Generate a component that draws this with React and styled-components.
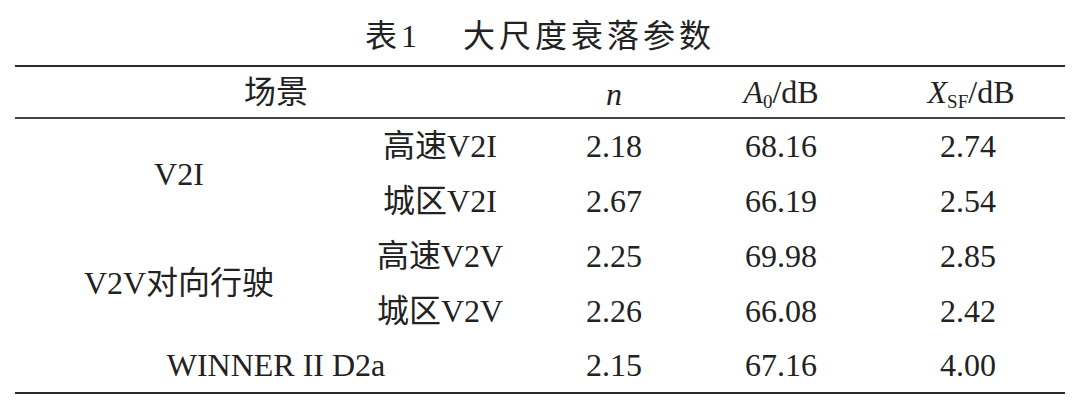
import React from "react";
import styled, { createGlobalStyle } from "styled-components";

const GlobalStyle = createGlobalStyle`
  html, body {
    margin: 0;
    padding: 0;
    background: #ffffff;
  }
  body {
    font-family: "Liberation Serif", "Noto Sans CJK SC", serif;
    color: #222222;
  }
`;

const Page = styled.div`
  width: 1080px;
  height: 409px;
  background: #ffffff;
  overflow: hidden;
`;

const Caption = styled.div`
  height: 65px;
  box-sizing: border-box;
  padding-top: 7px;
  display: flex;
  align-items: center;
  justify-content: center;
  gap: 42px;
  font-size: 32px;
  line-height: 1;
  color: #222;
`;

const CaptionPart = styled.span`
  letter-spacing: ${(props) => props.spacing || 0}px;
`;

const Table = styled.table`
  width: 1050px;
  margin: 0 15px;
  border-collapse: collapse;
  table-layout: fixed;
  border-top: 2px solid #2a2a2a;
  border-bottom: 2px solid #2a2a2a;
  font-size: 32px;
  line-height: 1;
`;

const HeadRow = styled.tr`
  height: 52px;
  border-bottom: 2px solid #444;
`;

const Row = styled.tr`
  height: 55px;
`;

const Cell = styled.td`
  padding: 0;
  text-align: center;
  vertical-align: middle;
  white-space: nowrap;
  font-weight: 400;
  padding-left: ${(props) => props.shift || 0}px;
  padding-top: ${(props) => props.down || 0}px;
`;

const Head = styled(Cell).attrs({ as: "th" })`
  font-weight: 400;
`;

const Italic = styled.i`
  font-style: italic;
`;

const Sub = styled.sub`
  font-size: 19px;
  vertical-align: -5px;
  line-height: 0;
`;

const rows = [
  { group: "V2I", span: 2, name: "高速V2I", n: "2.18", a0: "68.16", xsf: "2.74" },
  { name: "城区V2I", n: "2.67", a0: "66.19", xsf: "2.54" },
  { group: "V2V对向行驶", span: 2, name: "高速V2V", n: "2.25", a0: "69.98", xsf: "2.85" },
  { name: "城区V2V", n: "2.26", a0: "66.08", xsf: "2.42" },
];

export default function App() {
  return (
    <>
      <GlobalStyle />
      <Page>
        <Caption>
          <CaptionPart spacing={4}>表1</CaptionPart>
          <CaptionPart spacing={4}>大尺度衰落参数</CaptionPart>
        </Caption>
        <Table>
          <colgroup>
            <col style={{ width: 328 }} />
            <col style={{ width: 194 }} />
            <col style={{ width: 154 }} />
            <col style={{ width: 180 }} />
            <col style={{ width: 194 }} />
          </colgroup>
          <thead>
            <HeadRow>
              <Head colSpan={2}>场景</Head>
              <Head down={4}>
                <Italic>n</Italic>
              </Head>
              <Head>
                <Italic>A</Italic>
                <Sub>0</Sub>/dB
              </Head>
              <Head shift={6}>
                <Italic>X</Italic>
                <Sub>SF</Sub>/dB
              </Head>
            </HeadRow>
          </thead>
          <tbody>
            {rows.map((r) => (
              <Row key={r.name}>
                {r.group && <Cell rowSpan={r.span}>{r.group}</Cell>}
                <Cell>{r.name}</Cell>
                <Cell>{r.n}</Cell>
                <Cell>{r.a0}</Cell>
                <Cell shift={-4}>{r.xsf}</Cell>
              </Row>
            ))}
            <Row>
              <Cell colSpan={2}>WINNER II D2a</Cell>
              <Cell>2.15</Cell>
              <Cell>67.16</Cell>
              <Cell shift={-4}>4.00</Cell>
            </Row>
          </tbody>
        </Table>
      </Page>
    </>
  );
}
